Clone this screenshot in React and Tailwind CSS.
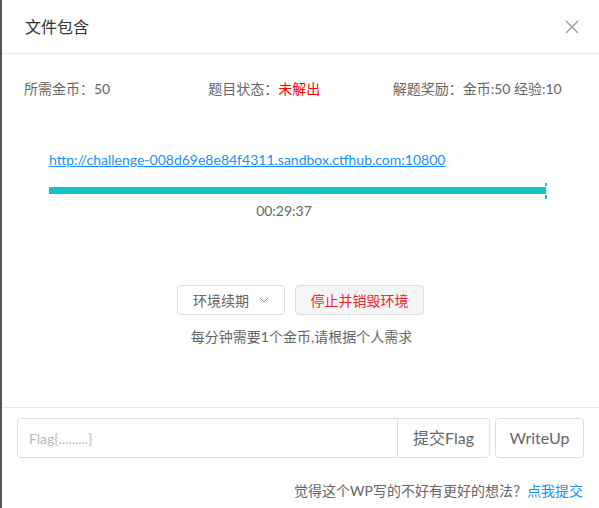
import React from 'react';

const font = { fontFamily: 'Lato, "Noto Sans CJK SC", sans-serif' };

function CloseIcon() {
  return (
    <svg width="14" height="14" viewBox="0 0 14 14" fill="none">
      <path d="M1 1L13 13M13 1L1 13" stroke="#999" strokeWidth="1.4" />
    </svg>
  );
}

export default function App() {
  return (
    <div
      className="w-[599px] h-[508px] bg-white border-l-2 border-[#555] flex flex-col text-[#666]"
      style={font}
    >
      {/* header */}
      <div className="h-[54px] shrink-0 border-b border-[#e8e8e8] pl-[23px] pr-[20px] flex items-center justify-between">
        <span className="text-[16px] text-[#333]">文件包含</span>
        <CloseIcon />
      </div>

      {/* body */}
      <div className="h-[354px] shrink-0 border-b border-[#e8e8e8] flex flex-col">
        <div className="grid grid-cols-3 pl-[22px] pr-[22px] pt-[25px] text-[14px] leading-[20px]">
          <span>所需金币：50</span>
          <span>
            题目状态：<span className="text-[#ff0000]">未解出</span>
          </span>
          <span>解题奖励：金币:50 经验:10</span>
        </div>

        <div className="pl-[47px] mt-[51px] text-[14px] leading-[20px]">
          <a href="#" className="text-[#1890ff] underline">
            http://challenge-008d69e8e84f4311.sandbox.ctfhub.com:10800
          </a>
        </div>

        <div className="pl-[47px] mt-[17px]">
          <div className="relative w-[500px] h-[7px] bg-[#f2f2f2]">
            <div className="h-full w-[497px] bg-[#13c2c2]" />
            <div className="absolute left-[496px] top-[-4px] w-[2px] h-[3px] bg-[#13c2c2]" />
            <div className="absolute left-[496px] top-[8px] w-[2px] h-[4px] bg-[#13c2c2]" />
          </div>
        </div>

        <div className="pl-[47px] mt-[8px]">
          <div className="w-[470px] text-center text-[14px] leading-[18px]">00:29:37</div>
        </div>

        <div className="flex justify-center gap-[10px] mt-[65px] text-[14px]">
          <button className="h-[30px] w-[108px] border border-[#ddd] rounded-[4px] bg-white flex items-center justify-center gap-[10px] text-[#666]">
            环境续期
            <svg width="10" height="6" viewBox="0 0 10 6" fill="none">
              <path d="M1 1L5 5L9 1" stroke="#888" strokeWidth="1" />
            </svg>
          </button>
          <button className="h-[30px] w-[129px] border border-[#ddd] rounded-[4px] bg-[#f5f5f5] text-[#f5222d]">
            停止并销毁环境
          </button>
        </div>

        <div className="text-center text-[14px] leading-[20px] mt-[12px] pl-[2px]">
          每分钟需要1个金币,请根据个人需求
        </div>
      </div>

      {/* footer */}
      <div className="px-[15px] pt-[10px]">
        <div className="flex h-[40px] gap-[5px]">
          <div className="flex flex-1 border border-[#ddd] rounded-[4px] overflow-hidden">
            <input
              className="flex-1 min-w-0 px-[11px] text-[14px] outline-none placeholder:text-[#bbb]"
              placeholder="Flag{.........}"
            />
            <button className="w-[92px] border-l border-[#ddd] text-[16px] text-[#666]">
              提交Flag
            </button>
          </div>
          <button className="w-[89px] border border-[#ddd] rounded-[4px] text-[16px] text-[#666]">
            WriteUp
          </button>
        </div>
        <div className="text-right text-[14px] leading-[20px] mt-[23px] pr-[1px]">
          觉得这个WP写的不好有更好的想法？
          <a href="#" className="text-[#1890ff]">点我提交</a>
        </div>
      </div>
    </div>
  );
}
